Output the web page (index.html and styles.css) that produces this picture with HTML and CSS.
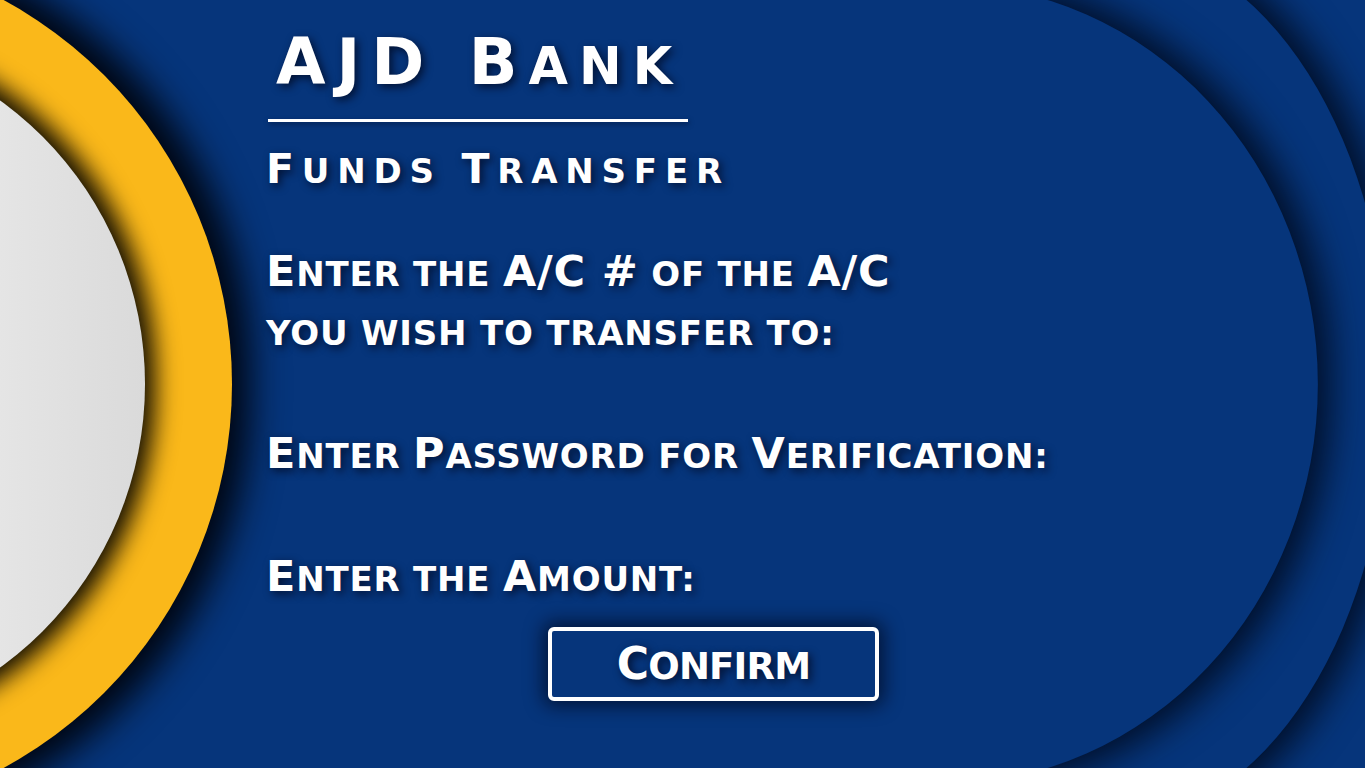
FILE: index.html
```html
<!DOCTYPE html>
<html lang="en">
<head>
<meta charset="utf-8">
<title>AJD Bank - Funds Transfer</title>
<link rel="stylesheet" href="styles.css">
</head>
<body>
<main class="screen">
  <svg class="backdrop" viewBox="0 0 1365 768" width="1365" height="768" aria-hidden="true">
    <defs>
      <filter id="shadowR" x="-10%" y="-10%" width="120%" height="120%" color-interpolation-filters="sRGB">
        <feMorphology in="SourceAlpha" operator="dilate" radius="7" result="d"/>
        <feGaussianBlur in="d" stdDeviation="18" result="b"/>
        <feOffset in="b" dx="6" dy="0" result="o"/>
        <feFlood flood-color="#000a1e" flood-opacity="0.9"/>
        <feComposite in2="o" operator="in" result="s"/>
        <feMerge><feMergeNode in="s"/><feMergeNode in="SourceGraphic"/></feMerge>
      </filter>
      <filter id="shadowY" x="-10%" y="-10%" width="120%" height="120%" color-interpolation-filters="sRGB">
        <feMorphology in="SourceAlpha" operator="dilate" radius="12" result="d"/>
        <feGaussianBlur in="d" stdDeviation="18" result="b"/>
        <feOffset in="b" dx="6" dy="0" result="o"/>
        <feFlood flood-color="#000510" flood-opacity="1"/>
        <feComposite in2="o" operator="in" result="s"/>
        <feMerge><feMergeNode in="s"/><feMergeNode in="SourceGraphic"/></feMerge>
      </filter>
      <filter id="shadowW" x="-10%" y="-10%" width="120%" height="120%" color-interpolation-filters="sRGB">
        <feMorphology in="SourceAlpha" operator="dilate" radius="6" result="d"/>
        <feGaussianBlur in="d" stdDeviation="12" result="b"/>
        <feOffset in="b" dx="4" dy="0" result="o"/>
        <feFlood flood-color="#000000" flood-opacity="0.95"/>
        <feComposite in2="o" operator="in" result="s"/>
        <feMerge><feMergeNode in="s"/><feMergeNode in="SourceGraphic"/></feMerge>
      </filter>
      <linearGradient id="whiteGrad" x1="0" y1="0" x2="1" y2="0">
        <stop offset="0" stop-color="#ececec"/>
        <stop offset="0.55" stop-color="#f2f2f2"/>
        <stop offset="1" stop-color="#dadada"/>
      </linearGradient>
    </defs>
    <rect width="1365" height="768" fill="#06357b"/>
    <path d="M -300 -300 H 1110 V -56 A 280 440 0 0 1 1110 824 V 1100 H -300 Z" fill="#06357b" filter="url(#shadowR)"/>
    <path d="M -300 -300 H 943 V -16 A 375 400 0 0 1 943 784 V 1100 H -300 Z" fill="#06357b" filter="url(#shadowR)"/>
    <circle cx="-205" cy="384" r="437" fill="#fab81a" filter="url(#shadowY)"/>
    <circle cx="-205" cy="384" r="350" fill="url(#whiteGrad)" filter="url(#shadowW)"/>
  </svg>

  <section class="panel">
    <h1 class="brand"><span class="cap">AJD B</span>ank</h1>
    <hr class="rule">
    <h2 class="subtitle"><span class="cap">F</span>unds <span class="cap">T</span>ransfer</h2>

    <form class="fields">
      <p class="label"><span class="cap">E</span>nter the <span class="cap">A/C #</span> of the <span class="cap">A/C</span><br>you wish to transfer to:</p>
      <p class="label"><span class="cap">E</span>nter <span class="cap">P</span>assword for <span class="cap">V</span>erification:</p>
      <p class="label"><span class="cap">E</span>nter the <span class="cap">A</span>mount:</p>
      <div class="actions">
        <button type="button" class="confirm"><span class="cap">C</span>onfirm</button>
      </div>
    </form>
  </section>
</main>
</body>
</html>
```

FILE: styles.css
```css
* {
  box-sizing: border-box;
}

html, body {
  margin: 0;
  padding: 0;
  background: #06357b;
}

body {
  width: 1365px;
  height: 768px;
  overflow: hidden;
  font-family: "DejaVu Sans", "Open Sans", sans-serif;
  font-weight: 700;
  color: #ffffff;
}

.screen {
  position: relative;
  width: 1365px;
  height: 768px;
  overflow: hidden;
}

.backdrop {
  position: absolute;
  left: 0;
  top: 0;
  display: block;
}

.panel {
  position: relative;
  display: flex;
  flex-direction: column;
  align-items: flex-start;
  padding: 27px 0 0 266px;
}

.brand,
.subtitle,
.label {
  margin: 0;
  font-weight: 700;
  text-transform: uppercase;
  text-shadow: 3px 3px 8px rgba(0, 6, 25, 0.75);
}

.cap {
  line-height: 1;
}

.brand {
  font-size: 51px;
  line-height: 80px;
  letter-spacing: 11px;
  padding-left: 10px;
}

.brand .cap {
  font-size: 64px;
}

.rule {
  margin: 12px 0 0 2px;
  width: 420px;
  height: 0;
  border: 0;
  border-top: 3px solid #ffffff;
  box-shadow: 1px 2px 5px rgba(0, 8, 30, 0.5);
}

.subtitle {
  margin-top: 24px;
  font-size: 34px;
  line-height: 50px;
  letter-spacing: 7.8px;
}

.subtitle .cap {
  font-size: 41px;
}

.fields {
  display: flex;
  flex-direction: column;
  align-items: flex-start;
  gap: 64px;
  margin-top: 49px;
}

.label {
  font-size: 34px;
  line-height: 59px;
  letter-spacing: 0.8px;
}

.label .cap {
  font-size: 43px;
}

.actions {
  margin: -46px 0 0 282px;
}

.confirm {
  display: block;
  width: 331px;
  height: 74px;
  padding: 0;
  background: #06357b;
  border: 4px solid #ffffff;
  border-radius: 6px;
  box-shadow: 0 0 18px 5px rgba(0, 8, 30, 0.7);
  color: #ffffff;
  font-family: "DejaVu Sans", "Open Sans", sans-serif;
  font-weight: 700;
  font-size: 37px;
  line-height: 71px;
  letter-spacing: -0.8px;
  text-align: center;
  text-transform: uppercase;
  text-shadow: 3px 3px 8px rgba(0, 6, 25, 0.75);
}

.confirm .cap {
  font-size: 44px;
}
```
